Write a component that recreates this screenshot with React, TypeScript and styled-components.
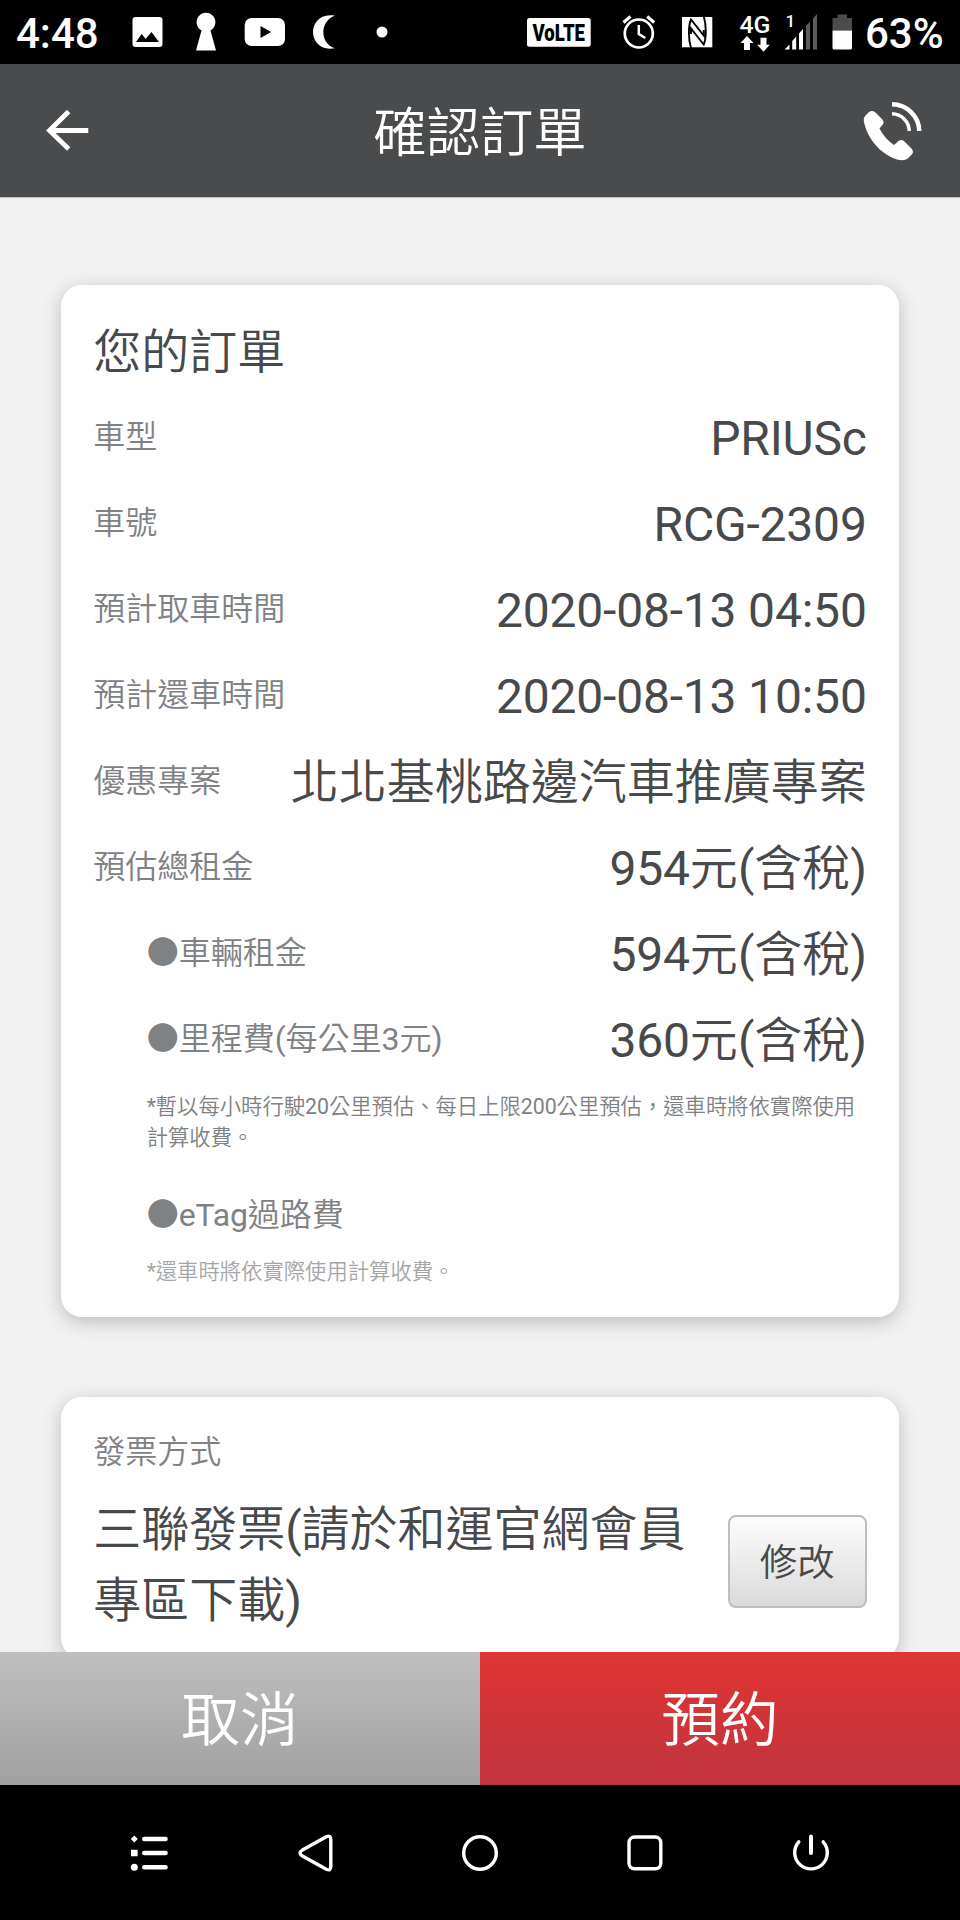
import React from "react";
import styled, { createGlobalStyle } from "styled-components";

const GlobalStyle = createGlobalStyle`
  *, *::before, *::after { box-sizing: border-box; }
  body {
    margin: 0;
    background: #000;
    font-family: Roboto, "Noto Sans CJK TC", sans-serif;
    font-weight: 350;
  }
  button { font-family: inherit; font-weight: inherit; }
`;

const Screen = styled.div`
  width: 960px;
  height: 1920px;
  display: flex;
  flex-direction: column;
  overflow: hidden;
`;

const StatusBar = styled.div`
  height: 64px;
  flex: none;
  display: flex;
  align-items: center;
  background: #000;
  color: #fff;
  padding: 0 17px 0 16px;
`;

const StatusText = styled.span<{ $gap?: number }>`
  margin-left: ${(p) => p.$gap ?? 0}px;
  font-size: 42px;
  line-height: 64px;
  padding-top: 4px;
  font-weight: 500;
  white-space: nowrap;
`;

const StatusIcon = styled.svg<{ $gap?: number }>`
  flex: none;
  display: block;
  height: 64px;
  overflow: visible;
  margin-left: ${(p) => p.$gap ?? 0}px;
`;

const StatusGroup = styled.div<{ $width: number }>`
  width: ${(p) => p.$width}px;
  flex: none;
  display: flex;
  align-items: center;
`;

const Header = styled.header`
  height: 133px;
  flex: none;
  display: grid;
  grid-template-columns: 120px 1fr 120px;
  align-items: center;
  background: #4a4b4d;
  color: #fff;
`;

const HeaderTitle = styled.h1`
  margin: 0;
  font-size: 53.33px;
  font-weight: inherit;
  line-height: 133px;
  text-align: center;
  padding-top: 4px;
  height: 133px;
`;

const IconButton = styled.button`
  height: 133px;
  border: 0;
  padding: 0;
  background: none;
  display: block;
  svg { display: block; }
`;

const Content = styled.main`
  flex: 1;
  min-height: 0;
  overflow: hidden;
  background: #f2f2f2;
  border-top: 1px solid #c4c4c4;
  padding: 87px 61.33px 0;
`;

const Card = styled.section<{ $height: number }>`
  height: ${(p) => p.$height}px;
  padding: 0 32px;
  background: #fefefe;
  border-radius: 21px;
  box-shadow: 0 5px 19px rgba(0, 0, 0, 0.22);
  & + & { margin-top: 80.5px; }
`;

const CardTitle = styled.h2`
  margin: 0;
  padding-top: 28px;
  font-size: 48px;
  font-weight: inherit;
  line-height: 80px;
  height: 110px;
  color: #48494a;
`;

const Row = styled.div<{ $indent?: boolean }>`
  height: 86px;
  display: flex;
  align-items: center;
  justify-content: space-between;
  padding-left: ${(p) => (p.$indent ? 53.33 : 0)}px;
`;

const Label = styled.span`
  font-size: 32px;
  line-height: 40px;
  padding-bottom: 2px;
  color: #808183;
  white-space: nowrap;
`;

const Value = styled.span`
  padding-top: 2px;
  font-size: 48px;
  line-height: 60px;
  color: #48494a;
  white-space: nowrap;
`;

const Latin = styled.span`
  font-weight: 400;
  letter-spacing: -0.004em;
`;

const Note = styled.p<{ $light?: boolean }>`
  margin: 0;
  padding-left: 53.33px;
  font-size: 21.33px;
  line-height: 31px;
  color: ${(p) => (p.$light ? "#a5a6a8" : "#808183")};
`;

const MileageNote = styled(Note)`
  padding-top: 7.5px;
`;

const FeeHeading = styled.div`
  padding: 42px 0 19px 53.33px;
  display: flex;
`;

const InvoiceLabel = styled.div`
  padding-top: 35px;
  height: 96px;
`;

const InvoiceRow = styled.div`
  display: flex;
  align-items: flex-start;
  justify-content: space-between;
`;

const InvoiceText = styled.p`
  margin: 0;
  padding-top: 1px;
  width: 600px;
  font-size: 48px;
  line-height: 71px;
  color: #48494a;
`;

const EditButton = styled.button`
  width: 139px;
  height: 93px;
  margin-top: 22px;
  padding: 2px 0 0;
  border: 2px solid #bdbec0;
  border-radius: 8px;
  background: linear-gradient(#fdfdfd, #dadada);
  color: #48494a;
  font-size: 37.33px;
  line-height: 60px;
`;

const Actions = styled.footer`
  height: 133px;
  flex: none;
  display: grid;
  grid-template-columns: 1fr 1fr;
`;

const ActionButton = styled.button<{ $primary?: boolean }>`
  border: 0;
  padding: 5px 0 0;
  color: #fff;
  font-size: 58.67px;
  line-height: 80px;
  background: ${(p) =>
    p.$primary
      ? "linear-gradient(#df3535 0%, #da3435 20%, #c0353f 100%)"
      : "linear-gradient(#bebfbe, #9fa09f)"};
`;

const NavBar = styled.nav`
  height: 135px;
  flex: none;
  display: flex;
  justify-content: center;
  align-items: flex-start;
  padding-top: 43.7px;
  background: #000;
`;

const NavItem = styled.div`
  width: 165.3px;
  display: flex;
  justify-content: center;
`;

const NavIcon = styled.svg`
  width: 48px;
  height: 48px;
  fill: none;
  stroke: #fff;
  stroke-width: 3.4;
  stroke-linecap: round;
  stroke-linejoin: round;
`;

const orderRows = [
  { label: "車型", value: "PRIUSc" },
  { label: "車號", value: "RCG-2309" },
  { label: "預計取車時間", value: "2020-08-13 04:50" },
  { label: "預計還車時間", value: "2020-08-13 10:50" },
  { label: "優惠專案", value: "北北基桃路邊汽車推廣專案" },
  { label: "預估總租金", value: "954元(含稅)" },
  { label: "●車輛租金", value: "594元(含稅)", indent: true },
  { label: "●里程費(每公里3元)", value: "360元(含稅)", indent: true },
];

/* Sets Latin runs in regular weight beside the lighter Chinese text. */
function Mixed({ text }: { text: string }) {
  return (
    <>
      {text
        .split(/([\x20-\x7e]+)/)
        .filter(Boolean)
        .map((run, i) =>
          /^[\x20-\x7e]/.test(run) ? (
            <Latin key={i}>{run}</Latin>
          ) : (
            <React.Fragment key={i}>{run}</React.Fragment>
          )
        )}
    </>
  );
}

function Status() {
  return (
    <StatusBar>
      <StatusGroup $width={511}>
        <StatusGroup $width={116}>
          <StatusText>4:48</StatusText>
        </StatusGroup>
        <StatusIcon width="31" viewBox="132 0 31 64">
          <path fill="#fff" fillRule="evenodd" d="M135.500 17h24a3 3 0 0 1 3 3v24a3 3 0 0 1-3 3h-24a3 3 0 0 1-3-3V20a3 3 0 0 1 3-3zM136 42h23l-7.500-10-5.800 7-4-5z" />
        </StatusIcon>
        <StatusIcon $gap={32} width="22" viewBox="195 0 22 64">
          <path fill="#fff" d="M201.500 30.500A9.400 9.400 0 1 1 210.500 30.500L216 50.500H196z" />
        </StatusIcon>
        <StatusIcon $gap={27} width="42" viewBox="244 0 42 64">
          <rect x="244.700" y="18" width="40.300" height="28" rx="7" fill="#fff" />
          <path d="M260.500 26v12l10.500-6z" fill="#000" />
        </StatusIcon>
        <StatusIcon $gap={26} width="24" viewBox="312 0 24 64">
          <path fill="#fff" d="M335 15.700C320 13 313 23 313 32S320 51 335 48.300C319.500 43.500 319.500 20.500 335 15.700z" />
        </StatusIcon>
        <StatusIcon $gap={40} width="12" viewBox="376 0 12 64">
          <circle cx="382" cy="32" r="5.500" fill="#fff" />
        </StatusIcon>
      </StatusGroup>
      <StatusIcon width="64" viewBox="527 0 64 64">
        <rect x="527" y="18" width="63.700" height="28.700" rx="2.500" fill="#fff" />
        <text x="532.500" y="40.700" textLength="52.500" lengthAdjust="spacingAndGlyphs" fontFamily="Roboto" fontWeight="900" fontSize="23" fill="#000">VoLTE</text>
      </StatusIcon>
      <StatusIcon $gap={31} width="34" viewBox="622 0 34 64" fill="none" stroke="#fff" strokeWidth="2.700">
        <circle cx="638.800" cy="33.500" r="14" />
        <path d="M638.800 25v9l6.500 4" strokeWidth="2.500" />
        <path d="M623.500 22.500l7-6M654.200 22.500l-7-6" strokeWidth="3" />
      </StatusIcon>
      <StatusIcon $gap={25} width="32" viewBox="681 0 32 64">
        <rect x="682" y="17" width="30.300" height="30.300" fill="#fff" />
        <path d="M690.800 48C688 39 688 26 690.800 19.500L703.500 35.500V30M703.500 16C706.300 25 706.300 38 703.500 44.500L690.800 28.500V34" transform="translate(.2 0)" fill="none" stroke="#000" strokeWidth="1.900" />
      </StatusIcon>
      <StatusIcon $gap={26} width="32" viewBox="739 0 32 64">
        <text x="739.500" y="32.500" textLength="31" lengthAdjust="spacingAndGlyphs" fontFamily="Roboto" fontWeight="500" fontSize="24" fill="#fff">4G</text>
        <path fill="#fff" d="M747 36l6.500 7h-3.500v7h-6v-7h-3.500zM763.500 51.700l-6.300-7h3.300v-7h6v7h3.300z" />
      </StatusIcon>
      <StatusIcon $gap={13} width="34" viewBox="784 0 34 64">
        <text x="785.500" y="27" fontFamily="Roboto" fontWeight="500" fontSize="17" fill="#fff">1</text>
        <path fill="#fff" d="M784.500 49.500l5-5v5zM792.200 41l4-4.500v13h-4zM799 33.500l4-4.500v20.500h-4z" />
        <path fill="#5c5c5c" d="M806 26l4-4.500v28h-4zM813 18.500l4-4.500v35.500h-4z" />
      </StatusIcon>
      <StatusIcon $gap={14} width="20" viewBox="832 0 20 64">
        <path fill="#4b4b4b" d="M832.500 18h5v-3.500h9.500V18h5v12.500h-19.500z" />
        <path fill="#fff" d="M832.500 30.500H852V48a1.500 1.500 0 0 1-1.500 1.500H834a1.500 1.500 0 0 1-1.500-1.500z" />
      </StatusIcon>
      <StatusText $gap={13}>63%</StatusText>
    </StatusBar>
  );
}

function Navigation() {
  return (
    <NavBar>
      <NavItem>
        <NavIcon viewBox="0 0 48 48">
          <path d="M19.300 10H40.500M19.300 24H40.500M19.300 38.200H40.500" strokeWidth="4.600" />
          <path d="M9.300 6.500l3.500 3.500-3.500 3.500L5.800 10zM6 20.700h6.600v6.600H6z" fill="#fff" stroke="none" />
          <circle cx="9.300" cy="38.300" r="3.500" fill="#fff" stroke="none" />
        </NavIcon>
      </NavItem>
      <NavItem>
        <NavIcon viewBox="0 0 48 48">
          <path d="M35.300 7.800Q39.800 5.700 39.800 10.500V37.500Q39.800 42.300 35.300 40.200L11 26.800Q7 24 11 21.300z" />
        </NavIcon>
      </NavItem>
      <NavItem>
        <NavIcon viewBox="0 0 48 48"><circle cx="24" cy="24" r="16.300" /></NavIcon>
      </NavItem>
      <NavItem>
        <NavIcon viewBox="0 0 48 48"><rect x="8" y="8" width="31.800" height="31.800" rx="5.500" /></NavIcon>
      </NavItem>
      <NavItem>
        <NavIcon viewBox="0 0 48 48">
          <path d="M11.800 12.800A16.300 16.300 0 1 0 36.200 12.800" />
          <path d="M24 7.500V24" strokeWidth="4" />
        </NavIcon>
      </NavItem>
    </NavBar>
  );
}

export default function App() {
  return (
    <Screen>
      <GlobalStyle />
      <Status />
      <Header>
        <IconButton aria-label="返回">
          <svg width="120" height="133" viewBox="0 0 120 133" fill="none" stroke="#fff" strokeWidth="4.800">
            <path d="M88.300 66.500H50M68.700 47.500L49.500 66.500l19.200 18.500" />
          </svg>
        </IconButton>
        <HeaderTitle>確認訂單</HeaderTitle>
        <IconButton aria-label="客服電話">
          <svg width="120" height="133" viewBox="840 64 120 133">
            <path fill="#fff" d="M868.500 112.500q4-3 7.500.5l6 6q3.200 3.500 0 6.500l-2.500 3q5 10 14.500 16.500l4-3.500q3.500-3 7 .5l6.500 6.500q3 3.500-.2 6.500l-3.300 3.300q-3.500 3.200-11 1.200C880 154 867 138 863.800 121q-.5-3.500 1.700-5.500z" />
            <path fill="none" stroke="#fff" strokeWidth="4.500" d="M892 104.200A27.500 27.500 0 0 1 919.300 131" />
            <path fill="none" stroke="#fff" strokeWidth="3.500" d="M892 113.800A17.500 17.500 0 0 1 909.300 131" />
          </svg>
        </IconButton>
      </Header>
      <Content>
        <Card $height={1031.5}>
          <CardTitle>您的訂單</CardTitle>
          {orderRows.map((row) => (
            <Row key={row.label} $indent={row.indent}>
              <Label><Mixed text={row.label} /></Label>
              <Value><Mixed text={row.value} /></Value>
            </Row>
          ))}
          <MileageNote>
            <Mixed text="*暫以每小時行駛20公里預估、每日上限200公里預估，還車時將依實際使用計算收費。" />
          </MileageNote>
          <FeeHeading>
            <Label><Mixed text="●eTag過路費" /></Label>
          </FeeHeading>
          <Note $light><Mixed text="*還車時將依實際使用計算收費。" /></Note>
        </Card>
        <Card $height={262}>
          <InvoiceLabel>
            <Label>發票方式</Label>
          </InvoiceLabel>
          <InvoiceRow>
            <InvoiceText><Mixed text="三聯發票(請於和運官網會員專區下載)" /></InvoiceText>
            <EditButton>修改</EditButton>
          </InvoiceRow>
        </Card>
      </Content>
      <Actions>
        <ActionButton>取消</ActionButton>
        <ActionButton $primary>預約</ActionButton>
      </Actions>
      <Navigation />
    </Screen>
  );
}
